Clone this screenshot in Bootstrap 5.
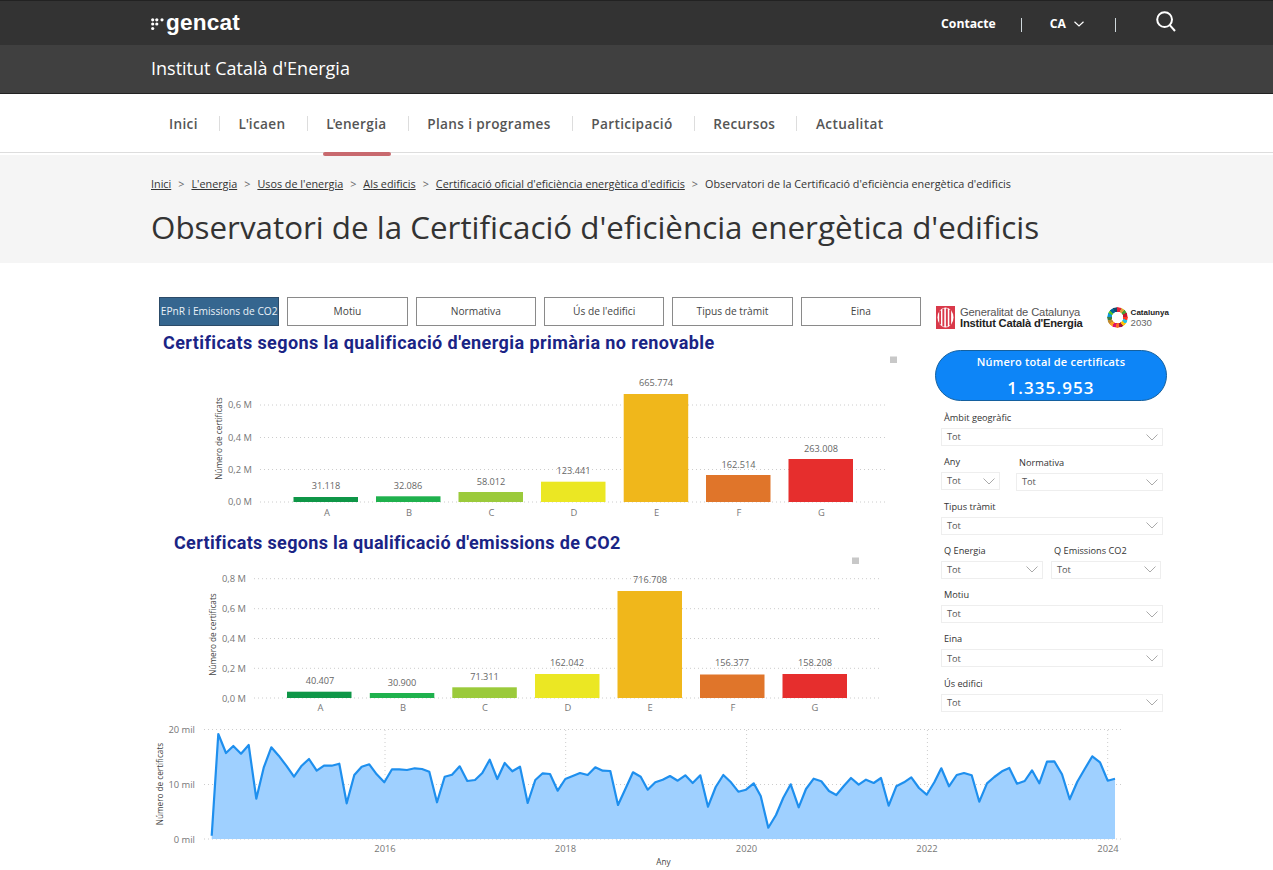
<!DOCTYPE html>
<html lang="ca">
<head>
<meta charset="utf-8">
<title>Observatori de la Certificació d'eficiència energètica d'edificis</title>
<link rel="stylesheet" href="https://cdn.jsdelivr.net/npm/bootstrap@5.3.0/dist/css/bootstrap.min.css">
<style>
html,body{height:870px;overflow:hidden;background:#fff;}
body{font-family:"Open Sans","Noto Sans",sans-serif;color:#333;}
.topstrip{height:45px;background:#333;border-top:1px solid #222;padding:0 97px 0 151px;}
.gc-logo{color:#fff;font:700 22.6px/1 "Liberation Sans",sans-serif;letter-spacing:.2px;text-decoration:none;}
.gc-dots{width:13px;height:13px;margin-right:2px;margin-top:3px;}
.top-right{padding-top:2px;}
.top-link{color:#fff;font-weight:700;font-size:12.2px;text-decoration:none;}
.top-sep{width:1px;height:14px;background:#cfd8dc;margin-top:2px;}
.subbar{height:49px;background:#404040;border-bottom:1px solid #222;padding:0 0 2px 151px;color:#fff;font-size:18px;}
.mainnav{height:59px;border-bottom:1px solid #ddd;padding-left:169px;}
.mainnav .nav-link{padding:0;color:#555;font-weight:600;font-size:13.6px;letter-spacing:.35px;position:relative;line-height:59px;}
.mainnav .nav-link.is-current::after{content:"";position:absolute;left:-3px;right:-4px;bottom:-3px;height:4px;border-radius:2px;background:#c8696e;}
.tight-a{letter-spacing:-.2px;}
.tight-b{letter-spacing:-1.1px;}
.nav-sep{width:1px;height:15px;background:#ddd;margin:0 18.7px 0 21px;}
.headband{height:108px;margin-top:2px;background:#f5f5f5;padding:21px 0 0 151px;}
.headband .breadcrumb{--bs-breadcrumb-divider:'>';--bs-breadcrumb-margin-bottom:0;--bs-breadcrumb-item-padding-x:7px;font-size:10.8px;line-height:16px;}
.headband .breadcrumb a{color:#333;}
.headband .breadcrumb-item.active{color:#333;}
.headband .breadcrumb-item+.breadcrumb-item::before{color:#666;}
.pagetitle{font-size:31.35px;font-weight:400;line-height:44px;margin:13px 0 0;color:#333;}
.report{height:607px;padding-left:150px;}
.rep-top{height:457px;}
.rep-left{width:771px;}
.tabrow{padding:34px 0 0 9px;gap:8px;}
.tabbtn{flex:1 1 0;height:29px;padding:1px 0 0;border:1px solid #8a8a8a;border-radius:0;background:#fff;color:#444;font-size:10.2px;outline:none;}
.tabbtn.is-on{background:#35668f;border-color:#2c4b68;color:#e9f1f8;white-space:nowrap;}
.rep-title{font-family:"Roboto",sans-serif;font-weight:700;color:#1a2485;font-size:18px;line-height:24px;letter-spacing:.42px;margin:0;}
.t1{padding:5px 0 0 13px;}
.t2{padding:5px 0 0 24px;letter-spacing:.34px;}
.rep-right{width:232px;margin-left:14px;padding-top:42px;}
.logos{height:25px;padding-left:1px;}
.gen-txt{font:11.2px/10.5px "Liberation Sans",sans-serif;color:#555;margin-left:5px;letter-spacing:-.15px;white-space:nowrap;}
.gen-txt b{color:#222;letter-spacing:-.2px;}
.sdg{width:21px;height:21px;border-radius:50%;margin-left:24px;background:conic-gradient(#e5243b 0 21deg,#dda63a 0 42deg,#4c9f38 0 63deg,#c5192d 0 84deg,#ff3a21 0 105deg,#26bde2 0 126deg,#fcc30b 0 147deg,#a21942 0 168deg,#fd6925 0 189deg,#dd1367 0 210deg,#fd9d24 0 231deg,#bf8b2e 0 252deg,#3f7e44 0 273deg,#0a97d9 0 294deg,#56c02b 0 315deg,#00689d 0 336deg,#19486a 0 360deg);-webkit-mask:radial-gradient(circle,transparent 5.5px,#000 6px);mask:radial-gradient(circle,transparent 5.5px,#000 6px);}
.sdg-txt{font:9.6px/10px "Liberation Sans",sans-serif;color:#666;margin-left:3px;white-space:nowrap;}
.sdg-txt b{font-size:8px;color:#222;display:block;}
.kpi{height:51px;margin-top:20px;border-radius:26px;background:#0d85f7;border:1px solid #14609f;color:#fff;text-align:center;}
.kpi-h{font-weight:600;font-size:11px;line-height:14px;padding-top:4px;letter-spacing:.2px;}
.kpi-n{font-size:17px;font-weight:600;line-height:24px;padding-top:7px;letter-spacing:1.1px;}
.slicers{margin:11px 4px 0 6px;gap:10.3px;}
.slab{font-size:9.2px;line-height:12px;height:16px;color:#333;padding-left:3px;}
.sbox{height:18px;border:1px solid #eee;padding:0 4px 0 5px;font-size:9.2px;color:#555;}
.sbox svg{width:12px;height:7px;}
.w-any{width:59px;margin-right:16px;}
.w-norm{flex:1;margin:1px 0 -1px;}
.w-qe{width:102px;margin-right:8px;}
.w-qc{flex:1;margin-right:2px;}
.chart{display:block;}
.chart text{font-family:"Open Sans",sans-serif;font-size:9.2px;fill:#666;}
.chart .ax{fill:#777;font-size:9.4px;}
.chart .ttl{fill:#444;font-size:8.2px;}
.chart .grid{stroke:#ccc;stroke-width:1;stroke-dasharray:1 3;}
.sq{fill:#c8c8c8;}
</style>
</head>
<body>
<header>
  <div class="topstrip d-flex align-items-center">
    <a class="gc-logo d-flex align-items-center" href="#">
      <svg class="gc-dots" viewBox="0 0 13 13" fill="#fff" aria-hidden="true">
        <circle cx="1.700" cy="1.800" r="1.600"/><circle cx="5.800" cy="1.800" r="1.600"/><circle cx="11" cy="1.800" r="1.600"/>
        <circle cx="1.700" cy="6" r="1.600"/><circle cx="5.800" cy="6" r="1.600"/>
        <circle cx="1.700" cy="10.500" r="1.600"/>
      </svg>gencat</a>
    <div class="top-right ms-auto d-flex align-items-center">
      <a class="top-link" href="#">Contacte</a>
      <span class="top-sep" style="margin-left:25px"></span>
      <a class="top-link d-flex align-items-center" href="#" style="margin-left:28px">CA
        <svg class="ms-2" width="10" height="6" viewBox="0 0 10 6" fill="none" stroke="#fff" stroke-width="1.2"><path d="M.5.8 5 5 9.500.8"/></svg></a>
      <span class="top-sep" style="margin-left:31px"></span>
      <svg style="margin-left:40px;margin-top:-4px" width="20" height="21" viewBox="0 0 20 21" fill="none" stroke="#fff" stroke-width="2"><circle cx="8.600" cy="8.600" r="7.400"/><path d="M13.800 14.200 19 20"/></svg>
    </div>
  </div>
  <div class="subbar d-flex align-items-center">Institut Català d'Energia</div>
  <nav class="mainnav">
    <ul class="nav align-items-center flex-nowrap">
      <li class="nav-item"><a class="nav-link" href="#">Inici</a></li><li class="nav-sep"></li>
      <li class="nav-item"><a class="nav-link" href="#"><span class="tight-a">L'</span>icaen</a></li><li class="nav-sep"></li>
      <li class="nav-item"><a class="nav-link is-current" href="#"><span class="tight-b">L'</span>energia</a></li><li class="nav-sep"></li>
      <li class="nav-item"><a class="nav-link" href="#">Plans i programes</a></li><li class="nav-sep"></li>
      <li class="nav-item"><a class="nav-link" href="#">Participació</a></li><li class="nav-sep"></li>
      <li class="nav-item"><a class="nav-link" href="#">Recursos</a></li><li class="nav-sep"></li>
      <li class="nav-item"><a class="nav-link" href="#">Actualitat</a></li>
    </ul>
  </nav>
</header>
<section class="headband">
  <ol class="breadcrumb">
    <li class="breadcrumb-item"><a href="#">Inici</a></li>
    <li class="breadcrumb-item"><a href="#">L'energia</a></li>
    <li class="breadcrumb-item"><a href="#">Usos de l'energia</a></li>
    <li class="breadcrumb-item"><a href="#">Als edificis</a></li>
    <li class="breadcrumb-item"><a href="#">Certificació oficial d'eficiència energètica d'edificis</a></li>
    <li class="breadcrumb-item active">Observatori de la Certificació d'eficiència energètica d'edificis</li>
  </ol>
  <h1 class="pagetitle">Observatori de la Certificació d'eficiència energètica d'edificis</h1>
</section>
<main class="report">
  <div class="rep-top d-flex">
    <div class="rep-left">
      <div class="tabrow d-flex">
        <button class="tabbtn is-on" type="button">EPnR i Emissions de CO2</button>
        <button class="tabbtn" type="button">Motiu</button>
        <button class="tabbtn" type="button">Normativa</button>
        <button class="tabbtn" type="button">Ús de l'edifici</button>
        <button class="tabbtn" type="button">Tipus de tràmit</button>
        <button class="tabbtn" type="button">Eina</button>
      </div>
      <h2 class="rep-title t1">Certificats segons la qualificació d'energia primària no renovable</h2>
      <svg class="chart" width="771" height="171" viewBox="150 355 771 171">
        <rect class="sq" x="890" y="356.500" width="7" height="6.500"/>
        <path class="grid" d="M260 405H887M260 437.500H887M260 469.500H887M260 502H887"/>
        <g text-anchor="end">
          <text class="ax" x="252" y="408">0,6 M</text><text class="ax" x="252" y="440.500">0,4 M</text>
          <text class="ax" x="252" y="472.500">0,2 M</text><text class="ax" x="252" y="505">0,0 M</text>
        </g>
        <text class="ttl" text-anchor="middle" transform="translate(222 438.500) rotate(-90)">Número de certificats</text>
        <rect x="293.500" y="497" width="64.500" height="5" fill="#0e9647"/>
        <rect x="376" y="496.300" width="64.500" height="5.700" fill="#1fb14d"/>
        <rect x="458.500" y="492" width="64.500" height="10" fill="#9bca3b"/>
        <rect x="541" y="481.700" width="64.500" height="20.300" fill="#ebe723"/>
        <rect x="623.700" y="394" width="64.500" height="108" fill="#f0b71b"/>
        <rect x="706" y="475" width="64.500" height="27" fill="#e0752a"/>
        <rect x="788.500" y="459" width="64.500" height="43" fill="#e62e2d"/>
        <g text-anchor="middle">
          <text x="326" y="488.500">31.118</text><text x="408" y="488.500">32.086</text><text x="491" y="484.500">58.012</text>
          <text x="573.500" y="474">123.441</text><text x="656" y="386">665.774</text><text x="738.500" y="468">162.514</text><text x="821" y="452">263.008</text>
          <text class="ax" x="327" y="515.500">A</text><text class="ax" x="409" y="515.500">B</text><text class="ax" x="491.500" y="515.500">C</text>
          <text class="ax" x="574" y="515.500">D</text><text class="ax" x="656.500" y="515.500">E</text><text class="ax" x="739" y="515.500">F</text><text class="ax" x="821.500" y="515.500">G</text>
        </g>
      </svg>
      <h2 class="rep-title t2">Certificats segons la qualificació d'emissions de CO2</h2>
      <svg class="chart" width="771" height="164" viewBox="150 555 771 164">
        <rect class="sq" x="852" y="557.500" width="7" height="6.500"/>
        <path class="grid" d="M254 578.700H881M254 608.700H881M254 638.500H881M254 668.300H881M254 698H881"/>
        <g text-anchor="end">
          <text class="ax" x="246" y="582">0,8 M</text><text class="ax" x="246" y="612">0,6 M</text><text class="ax" x="246" y="641.500">0,4 M</text>
          <text class="ax" x="246" y="671.500">0,2 M</text><text class="ax" x="246" y="701.500">0,0 M</text>
        </g>
        <text class="ttl" text-anchor="middle" transform="translate(216 634.500) rotate(-90)">Número de certificats</text>
        <rect x="287" y="691.700" width="64.500" height="6.300" fill="#0e9647"/>
        <rect x="369.800" y="693" width="64.500" height="5" fill="#1fb14d"/>
        <rect x="452.300" y="687.300" width="64.500" height="10.700" fill="#9bca3b"/>
        <rect x="535" y="674" width="64.500" height="24" fill="#ebe723"/>
        <rect x="617.500" y="591" width="64.500" height="107" fill="#f0b71b"/>
        <rect x="700" y="674.500" width="64.500" height="23.500" fill="#e0752a"/>
        <rect x="782.500" y="674" width="64.500" height="24" fill="#e62e2d"/>
        <g text-anchor="middle">
          <text x="320" y="684">40.407</text><text x="402" y="686">30.900</text><text x="484.500" y="680">71.311</text>
          <text x="567" y="666">162.042</text><text x="650" y="583">716.708</text><text x="732" y="666">156.377</text><text x="815" y="666">158.208</text>
          <text class="ax" x="320.500" y="711">A</text><text class="ax" x="403" y="711">B</text><text class="ax" x="485" y="711">C</text>
          <text class="ax" x="568" y="711">D</text><text class="ax" x="650" y="711">E</text><text class="ax" x="733" y="711">F</text><text class="ax" x="815" y="711">G</text>
        </g>
      </svg>
    </div>
    <aside class="rep-right">
      <div class="logos d-flex align-items-center">
        <svg class="flex-shrink-0" width="19" height="23" viewBox="0 0 19 23" aria-hidden="true">
          <rect width="19" height="23" fill="#d9394a"/>
          <ellipse cx="9.500" cy="11.500" rx="8" ry="10" fill="#fff"/>
          <path d="M3.200 4.500h1.800v14h-1.800zM6.400 2.500h1.900v18h-1.900zM9.900 2.500h1.900v18h-1.900zM13.300 3.800h1.800v15.400h-1.800z" fill="#d9394a"/>
        </svg>
        <div class="gen-txt">Generalitat de Catalunya<br><b>Institut Català d'Energia</b></div>
        <div class="sdg flex-shrink-0"></div>
        <div class="sdg-txt"><b>Catalunya</b>2030</div>
      </div>
      <div class="kpi">
        <div class="kpi-h">Número total de certificats</div>
        <div class="kpi-n">1.335.953</div>
      </div>
      <div class="slicers d-flex flex-column">
        <div><div class="slab">Àmbit geogràfic</div><div class="sbox d-flex align-items-center justify-content-between">Tot<svg viewBox="0 0 12 7" fill="none" stroke="#aaa"><path d="M.5.5 6 6l5.500-5.500"/></svg></div></div>
        <div class="d-flex">
          <div class="w-any"><div class="slab">Any</div><div class="sbox d-flex align-items-center justify-content-between">Tot<svg viewBox="0 0 12 7" fill="none" stroke="#aaa"><path d="M.5.5 6 6l5.500-5.500"/></svg></div></div>
          <div class="w-norm"><div class="slab">Normativa</div><div class="sbox d-flex align-items-center justify-content-between">Tot<svg viewBox="0 0 12 7" fill="none" stroke="#aaa"><path d="M.5.5 6 6l5.500-5.500"/></svg></div></div>
        </div>
        <div><div class="slab">Tipus tràmit</div><div class="sbox d-flex align-items-center justify-content-between">Tot<svg viewBox="0 0 12 7" fill="none" stroke="#aaa"><path d="M.5.5 6 6l5.500-5.500"/></svg></div></div>
        <div class="d-flex">
          <div class="w-qe"><div class="slab">Q Energia</div><div class="sbox d-flex align-items-center justify-content-between">Tot<svg viewBox="0 0 12 7" fill="none" stroke="#aaa"><path d="M.5.5 6 6l5.500-5.500"/></svg></div></div>
          <div class="w-qc"><div class="slab">Q Emissions CO2</div><div class="sbox d-flex align-items-center justify-content-between">Tot<svg viewBox="0 0 12 7" fill="none" stroke="#aaa"><path d="M.5.5 6 6l5.500-5.500"/></svg></div></div>
        </div>
        <div><div class="slab">Motiu</div><div class="sbox d-flex align-items-center justify-content-between">Tot<svg viewBox="0 0 12 7" fill="none" stroke="#aaa"><path d="M.5.5 6 6l5.500-5.500"/></svg></div></div>
        <div><div class="slab">Eina</div><div class="sbox d-flex align-items-center justify-content-between">Tot<svg viewBox="0 0 12 7" fill="none" stroke="#aaa"><path d="M.5.5 6 6l5.500-5.500"/></svg></div></div>
        <div><div class="slab">Ús edifici</div><div class="sbox d-flex align-items-center justify-content-between">Tot<svg viewBox="0 0 12 7" fill="none" stroke="#aaa"><path d="M.5.5 6 6l5.500-5.500"/></svg></div></div>
      </div>
    </aside>
  </div>
  <svg class="chart" width="985" height="150" viewBox="150 720 985 150">
    <path class="grid" d="M204 729.500H1122M204 784.500H1122M204 839H1122M385 730V839M565.700 730V839M746.600 730V839M927.400 730V839M1107.700 730V839"/>
    <polygon id="lcfill" fill="#9fd0ff"/>
    <polyline id="lcline" fill="none" stroke="#1e8fee" stroke-width="2.200" stroke-linejoin="round"/>
    <g text-anchor="end">
      <text class="ax" x="195" y="733">20 mil</text><text class="ax" x="195" y="788">10 mil</text><text class="ax" x="195" y="842.500">0 mil</text>
    </g>
    <text class="ttl" text-anchor="middle" transform="translate(163 784) rotate(-90)">Número de certificats</text>
    <g text-anchor="middle">
      <text class="ax" x="385" y="852">2016</text><text class="ax" x="565.500" y="852">2018</text><text class="ax" x="746.500" y="852">2020</text>
      <text class="ax" x="927" y="852">2022</text><text class="ax" x="1108" y="852">2024</text>
      <text class="ttl" x="663.500" y="864.500">Any</text>
    </g>
  </svg>
</main>
<script>
// Monthly certificate counts, as (x,y) read in two crops of the chart
var a=[185,362,205,57,228,114,250,93,273,116,296,90,319,251,341,158,364,97,386,122,409,152,432,185,455,152,477,132,500,167,522,152,545,152,568,146,590,265,613,180,635,155,658,148,680,178,703,202,726,163,748,163,771,165,794,160,816,162,838,170,861,262,884,185,906,179,929,154,952,198,975,195,997,174,1019,134,1042,192,1064,144,1087,169,1110,155,1133,264,1156,195,1178,175,1200,177,1223,227,1246,192,1268,183,1290,174,1313,180,1336,157,1358,167,1381,168,1404,270,1427,220,1449,172,1472,185];
var b=[23,224,46,202,68,194,90,183,113,197,136,181,158,204,181,181,204,275,227,216,250,180,273,202,295,230,318,224,341,205,362,243,385,338,408,300,430,248,452,208,476,277,498,222,521,191,544,199,567,228,589,240,612,212,633,189,656,209,678,194,701,204,723,189,746,272,769,214,792,202,814,187,837,219,860,239,883,202,904,160,927,214,950,180,972,174,995,181,1018,260,1041,205,1063,186,1086,169,1108,159,1131,206,1154,198,1176,166,1198,205,1221,140,1243,139,1266,178,1289,253,1312,200,1334,162,1357,124,1380,142,1403,197,1425,191];
var p=[],i;
for(i=0;i<a.length;i+=2)p.push((a[i]/3+150).toFixed(1)+','+(a[i+1]/3+715).toFixed(1));
for(i=0;i<b.length;i+=2)p.push((b[i]/3+640).toFixed(1)+','+(b[i+1]/3+715).toFixed(1));
document.getElementById('lcline').setAttribute('points',p.join(' '));
document.getElementById('lcfill').setAttribute('points','211.7,839 '+p.join(' ')+' 1115,839');
</script>
<script src="https://cdn.jsdelivr.net/npm/bootstrap@5.3.0/dist/js/bootstrap.bundle.min.js"></script>
</body>
</html>
